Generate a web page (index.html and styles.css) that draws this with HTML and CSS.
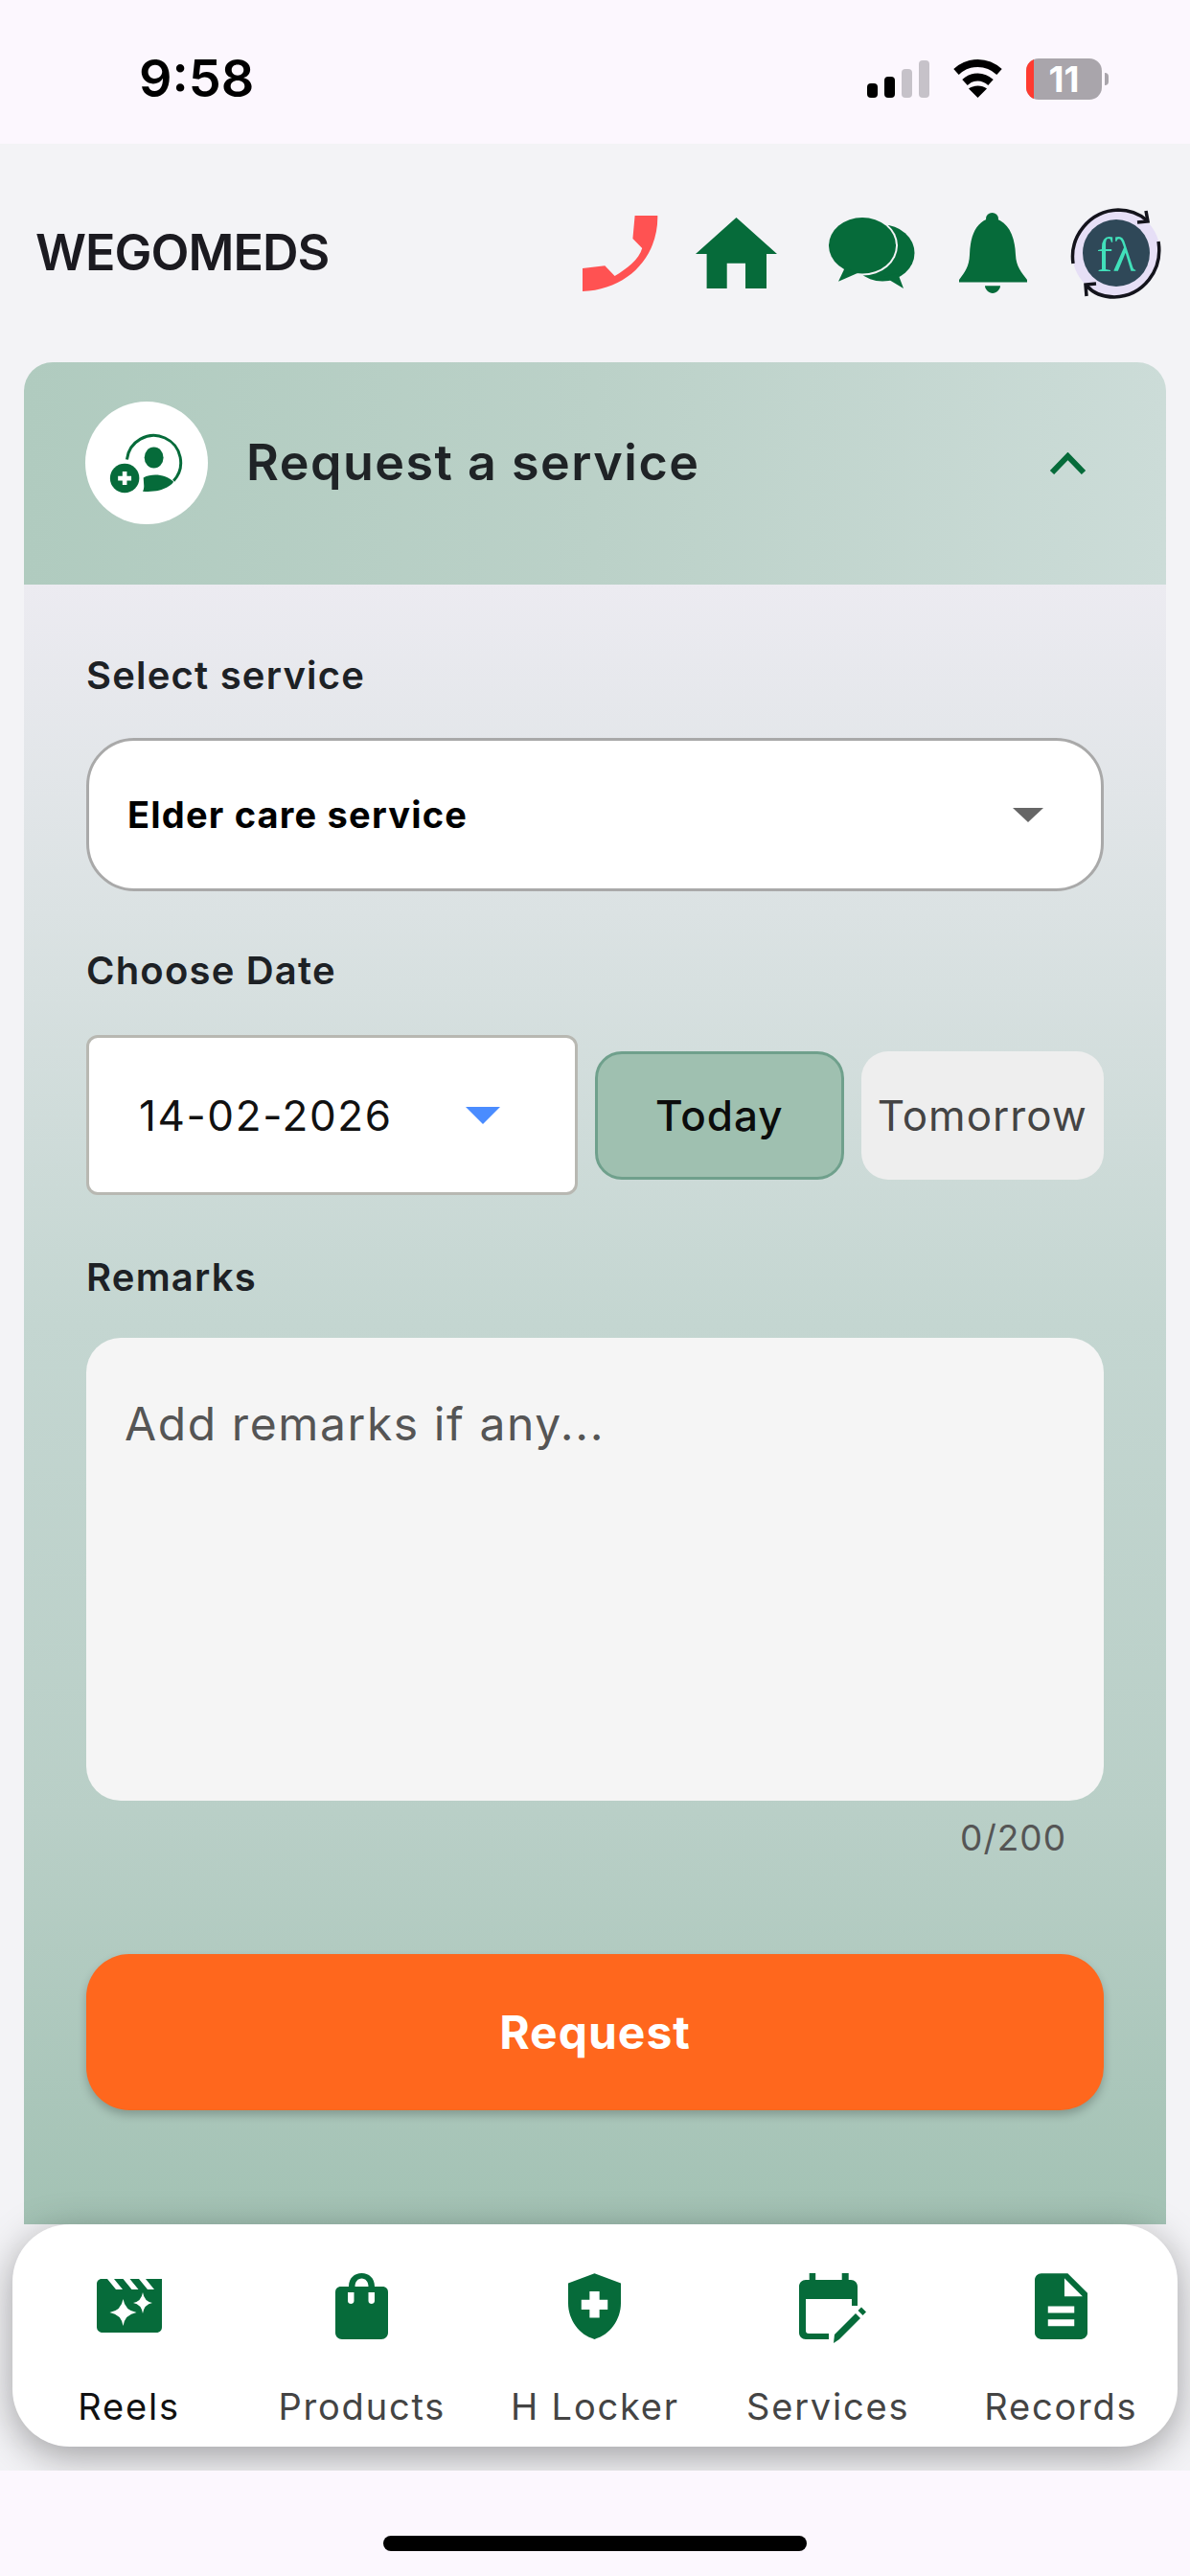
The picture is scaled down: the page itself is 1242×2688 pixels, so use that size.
FILE: index.html
```html
<!DOCTYPE html>
<html lang="en">
<head>
<meta charset="utf-8">
<title>WEGOMEDS</title>
<link rel="stylesheet" href="styles.css">
</head>
<body>
<div class="phone">
  <div class="status">
    <span class="time">9:58</span>
    <div class="status-icons">
      <div class="signal">
        <i class="bar b1"></i><i class="bar b2"></i><i class="bar b3"></i><i class="bar b4"></i>
      </div>
      <svg class="wifi" viewBox="0 0 53 40"><path d="M4 13C17 1 36 1 49 13" fill="none" stroke="#000" stroke-width="8"/><path d="M13 24C21 16.500 32 16.500 40 24" fill="none" stroke="#000" stroke-width="8"/><path d="M26.500 40L17 30.500C22 26.500 31 26.500 36 30.500Z" fill="#000"/></svg>
      <div class="battery"><span class="battery-low"></span><span class="battery-num">11</span></div>
      <span class="battery-nub"></span>
    </div>
  </div>

  <div class="app">
    <header class="topbar">
      <h1 class="brand">WEGOMEDS</h1>
      <div class="top-icons">
        <svg class="ic-phone" viewBox="0 0 79 79"><path fill="#ff5252" d="M54.600 0H78.300C79.200 42.300 47.900 77.300 0 79V55L23.300 52.300L33.600 63C45.700 55.700 59.100 45.700 62.200 34L52.400 24Z"/></svg>
        <svg class="ic-home" viewBox="0 0 85 74"><path fill="#066b3a" d="M42.500 0L85 38H74V74H52V47.700H32.700V74H11.600V38H0Z"/></svg>
        <svg class="ic-chat" viewBox="0 0 90 74"><ellipse cx="56" cy="37" rx="33.500" ry="29.500" fill="#066b3a"/><path fill="#066b3a" d="M58 62L78 74L72 58Z"/><ellipse cx="35" cy="29.300" rx="37" ry="31.300" fill="#f3f3f6"/><ellipse cx="35" cy="29.300" rx="35" ry="29.300" fill="#066b3a"/><path fill="#066b3a" d="M10 66.700L17 52L30 58Z"/></svg>
        <svg class="ic-bell" viewBox="0 0 71 84"><ellipse cx="34.500" cy="6" rx="6.500" ry="6" fill="#066b3a"/><path fill="#066b3a" d="M34.500 5C20 8 11.600 20 11 44C10.500 56 6 62 0 70V72.600H71V70C65 62 59.500 56 59 44C58 20 49 8 34.500 5Z"/><path fill="#066b3a" d="M27 76.300H43C43 80 39 84 35 84C31 84 27 80 27 76.300Z"/></svg>
        <svg class="ic-avatar" viewBox="0 0 97 95">
          <circle cx="48" cy="47" r="46" fill="#e6dff6"/>
          <circle cx="48" cy="47" r="35" fill="#2f4858"/>
          <path d="M3 58C-1 30 20 3 50 2C62 2 72 6 80 13" fill="none" stroke="#14141c" stroke-width="3.500"/>
          <path d="M70 15L81 14L79 3" fill="none" stroke="#14141c" stroke-width="3.500"/>
          <path d="M92 35C97 65 76 92 46 93C34 93 24 89 17 81" fill="none" stroke="#14141c" stroke-width="3.500"/>
          <path d="M27 79L16 80L17 92" fill="none" stroke="#14141c" stroke-width="3.500"/>
          <text class="fx" x="48" y="66" text-anchor="middle">fλ</text>
        </svg>
      </div>
    </header>

    <section class="card">
      <div class="card-head">
        <div class="head-circle">
          <svg class="ic-service" viewBox="160 155 240 190">
            <path d="M218 238A85 85 0 1 1 365 305" fill="none" stroke="#066b3a" stroke-width="9"/>
            <ellipse cx="303" cy="232" rx="30" ry="33" fill="#066b3a"/>
            <path fill="#066b3a" d="M270 295C300 280 340 285 365 308C350 330 310 342 268 338C275 325 270 310 270 295Z"/>
            <circle cx="211" cy="297" r="46" fill="#066b3a"/>
            <path fill="#fff" d="M204 276H218V290H232V304H218V318H204V304H190V290H204Z"/>
          </svg>
        </div>
        <h2 class="card-title">Request a service</h2>
        <svg class="chevron" viewBox="0 0 39 23"><path d="M3 21L19.500 4L36 21" fill="none" stroke="#066b3a" stroke-width="6"/></svg>
      </div>

      <div class="card-body">
        <div class="label label-first">Select service</div>
        <div class="select">
          <span class="select-text">Elder care service</span>
          <svg class="caret-grey" viewBox="0 0 32 15"><path d="M0 0H32L16 15Z" fill="#666"/></svg>
        </div>

        <div class="label label-date">Choose Date</div>
        <div class="date-row">
          <div class="date-box">
            <span class="date-text">14-02-2026</span>
            <svg class="caret-blue" viewBox="0 0 36 18"><path d="M0 0H36L18 18Z" fill="#4a8cff"/></svg>
          </div>
          <div class="pill pill-on">Today</div>
          <div class="pill pill-off">Tomorrow</div>
        </div>

        <div class="label label-remarks">Remarks</div>
        <div class="remarks">Add remarks if any...</div>
        <div class="counter">0/200</div>

        <div class="request">Request</div>
      </div>
    </section>

    <nav class="nav">
      <div class="nav-item active">
        <div class="nav-icon">
          <svg class="ic-reels" viewBox="0 0 68 56">
            <path fill="#066b3a" d="M5 0H68V50C68 53.500 66 56 62 56H6C2.500 56 0 53.500 0 50V5C0 2.500 2 0 5 0Z"/>
            <path fill="#fff" d="M11 0H18L27 11H20ZM27.500 0H34.500L43.500 11H36.500ZM44 0H51L60 11H53ZM60 0H68V0L68 0Z"/>
            <path fill="#fff" d="M27.500 21Q29.500 33 41.500 35Q29.500 37 27.500 49Q25.500 37 13.500 35Q25.500 33 27.500 21Z"/>
            <path fill="#fff" d="M48 14Q49.500 23.500 58 25Q49.500 26.500 48 36Q46.500 26.500 38 25Q46.500 23.500 48 14Z"/>
          </svg>
        </div>
        <span>Reels</span>
      </div>
      <div class="nav-item">
        <div class="nav-icon">
          <svg class="ic-doc" viewBox="0 0 55 69">
            <path fill="#066b3a" fill-rule="evenodd" d="M14 14C14 5 20 0 27.500 0C35 0 41 5 41 14H49C53 14 55 16.500 55 20V62C55 66 52 69 48 69H7C3 69 0 66 0 62V20C0 16.500 2 14 6 14ZM20.500 14H34.500C34.500 9 31.500 5.500 27.500 5.500C23.500 5.500 20.500 9 20.500 14ZM13 20V29C13 33 19.500 33 19.500 29V20ZM34.500 20V29C34.500 33 41 33 41 29V20Z"/>
          </svg>
        </div>
        <span>Products</span>
      </div>
      <div class="nav-item">
        <div class="nav-icon">
          <svg class="ic-doc" viewBox="4 2 16 20"><path fill="#066b3a" fill-rule="evenodd" d="M12 2L4 5V11.090C4 16.140 7.410 20.850 12 22C16.590 20.850 20 16.140 20 11.090V5ZM10.500 7.500H13.500V10H16V13H13.500V15.500H10.500V13H8V10H10.500Z"/></svg>
        </div>
        <span>H Locker</span>
      </div>
      <div class="nav-item">
        <div class="nav-icon">
          <svg class="ic-cal" viewBox="0 0 70 73">
            <path fill="#066b3a" d="M10.700 0H17.200V7H44.700V0H51.700V7H54C58 7 61 10 61 14V34H55V27H7V60C7 62 8 63 10 63H31V69H7C3 69 0 66 0 62V14C0 10 3 7 7 7H10.700Z"/>
            <path fill="#066b3a" d="M37 64L59 42L64 47L42 69L36 73Z"/>
            <path fill="#066b3a" d="M61.500 39L65 35.500L70 40.500L66.500 44Z"/>
          </svg>
        </div>
        <span>Services</span>
      </div>
      <div class="nav-item">
        <div class="nav-icon">
          <svg class="ic-doc" viewBox="4 2 16 20"><path fill="#066b3a" fill-rule="evenodd" d="M14 2H6C4.900 2 4 2.900 4 4V20C4 21.100 4.900 22 6 22H18C19.100 22 20 21.100 20 20V8ZM16 18H8V16H16ZM16 14H8V12H16ZM13 9V3.500L18.500 9Z"/></svg>
        </div>
        <span>Records</span>
      </div>
    </nav>
  </div>

  <div class="bottom"><div class="home-bar"></div></div>
</div>
</body>
</html>
```

FILE: styles.css
```css
* { box-sizing: border-box; }
html, body { margin: 0; padding: 0; }
body { font-family: "Inter", "Roboto", sans-serif; background: #fcf7fe; }
svg { display: block; }

.phone { width: 1242px; height: 2688px; display: flex; flex-direction: column; overflow: hidden; }

/* status bar */
.status {
  height: 150px; flex: none; background: #fcf7fe;
  display: flex; align-items: center; justify-content: space-between;
  padding: 14px 85px 0 145px;
}
.time { font-size: 54px; font-weight: 600; color: #000; line-height: 1; }
.status-icons { display: flex; align-items: center; }
.signal { display: flex; align-items: flex-end; gap: 7px; height: 39px; margin-top: 1px; }
.bar { display: block; width: 11px; border-radius: 4px; background: #000; }
.b1 { height: 15px; }
.b2 { height: 22px; }
.b3 { height: 30px; background: #c6c2c9; }
.b4 { height: 39px; background: #c6c2c9; }
.wifi { width: 53px; height: 40px; margin-left: 24px; }
.battery {
  position: relative; width: 79px; height: 43px; margin-left: 24px;
  border-radius: 13px; background: #a9a5ab; overflow: hidden;
  display: flex; align-items: center; justify-content: center;
}
.battery-low { position: absolute; left: 0; top: 0; bottom: 0; width: 8px; background: #ff3b30; }
.battery-num { color: #fff; font-size: 37px; font-weight: 700; line-height: 1; }
.battery-nub { width: 4px; height: 13px; margin-left: 3px; background: #a9a5ab; border-radius: 0 4px 4px 0; }

/* app */
.app { flex: 1; min-height: 0; display: flex; flex-direction: column; background: #f3f3f6; padding-bottom: 25px; }
.topbar { height: 228px; flex: none; display: flex; align-items: center; justify-content: space-between; padding: 0 28px 0 37px; }
.brand { margin: 0; font-size: 52px; font-weight: 600; color: #1b1a20; letter-spacing: -1px; line-height: 1; }
.top-icons { display: flex; align-items: center; }
.ic-phone { width: 79px; height: 79px; }
.ic-home { width: 85px; height: 74px; margin-left: 39px; }
.ic-chat { width: 90px; height: 74px; margin-left: 54px; }
.ic-bell { width: 71px; height: 84px; margin-left: 46px; }
.ic-avatar { width: 97px; height: 95px; margin-left: 45px; overflow: visible; }
.fx { font-family: "Liberation Serif", "DejaVu Serif", serif; font-size: 50px; fill: #41e0ba; }

/* card */
.card {
  flex: 1; min-height: 0; margin: 0 25px; display: flex; flex-direction: column;
  border-radius: 30px 30px 0 0; overflow: hidden;
}
.card-head {
  height: 232px; flex: none; display: flex; align-items: center;
  padding: 0 83px 22px 64px;
  background: linear-gradient(90deg, #b0cbbf 0%, #bbd1c8 50%, #ccdcd8 100%);
}
.head-circle { width: 128px; height: 128px; border-radius: 50%; background: #fff; display: flex; align-items: center; justify-content: center; flex: none; }
.ic-service { width: 80px; height: 63px; }
.card-title { margin: 0 0 0 40px; font-size: 52px; font-weight: 600; color: #1f2326; letter-spacing: 1.5px; line-height: 1; }
.chevron { width: 39px; height: 23px; margin-left: auto; }

.card-body {
  flex: 1; min-height: 0; padding: 0 65px;
  background: linear-gradient(180deg, #ecebf1 0%, #dbe2e3 20%, #c4d6d1 45%, #b9cfc7 75%, #a3c2b4 100%);
}
.label { font-size: 40px; font-weight: 600; color: #1d2125; letter-spacing: 1.2px; line-height: 50px; }
.label-first { margin-top: 70px; }
.label-date { margin-top: 58px; }
.label-remarks { margin-top: 61px; }

.select {
  height: 160px; margin-top: 40px; padding: 0 60px 0 40px;
  display: flex; align-items: center; justify-content: space-between;
  background: #fff; border: 3px solid #a9a9a9; border-radius: 50px;
}
.select-text { font-size: 38px; font-weight: 700; color: #000; letter-spacing: 1.2px; }
.caret-grey { width: 32px; height: 15px; }

.date-row { display: flex; align-items: center; gap: 18px; margin-top: 42px; }
.date-box {
  flex: none; width: 513px; height: 167px; padding: 0 78px 0 52px;
  display: flex; align-items: center; justify-content: space-between;
  background: #fff; border: 3px solid #b8b8b2; border-radius: 12px;
}
.date-text { font-size: 44px; font-weight: 400; color: #111; letter-spacing: 1.6px; }
.caret-blue { width: 36px; height: 18px; }
.pill {
  flex: 1; height: 134px; display: flex; align-items: center; justify-content: center;
  border-radius: 28px; font-size: 44px; letter-spacing: 1px;
}
.pill-on { background: #9fc0b0; border: 3px solid #6fa08c; color: #0c0c0c; font-weight: 500; }
.pill-off { background: #eeeeee; color: #444; font-weight: 400; }

.remarks {
  height: 483px; margin-top: 38px; padding: 62px 40px 0;
  background: #f5f5f5; border-radius: 36px;
  font-size: 48px; line-height: 56px; color: #555; letter-spacing: 1.6px;
}
.counter { margin-top: 19px; padding-right: 39px; text-align: right; font-size: 37px; line-height: 40px; color: #555; letter-spacing: 1px; }
.request {
  height: 163px; margin-top: 101px; display: flex; align-items: center; justify-content: center;
  background: #ff671d; border-radius: 45px; box-shadow: 0 5px 10px rgba(0, 0, 0, .22);
  color: #fff; font-size: 48px; font-weight: 700; letter-spacing: 1px;
}

/* bottom nav */
.nav {
  flex: none; height: 232px; margin: 0 13px; padding-top: 51px;
  display: grid; grid-template-columns: repeat(5, 1fr);
  background: #fff; border-radius: 60px;
  box-shadow: 0 10px 40px rgba(0, 0, 0, .35);
}
.nav-item { display: flex; flex-direction: column; align-items: center; font-size: 38px; line-height: 44px; color: #444; letter-spacing: 1.8px; }
.nav-item.active { color: #111; }
.nav-icon { height: 73px; margin-bottom: 44px; display: flex; align-items: flex-start; }
.ic-reels { width: 68px; height: 56px; margin-top: 6px; }
.ic-doc { width: 55px; height: 69px; }
.ic-cal { width: 70px; height: 73px; margin-left: 9px; }

/* bottom safe area */
.bottom { height: 110px; flex: none; background: #fcf7fe; display: flex; justify-content: center; padding-top: 68px; }
.home-bar { width: 442px; height: 16px; border-radius: 8px; background: #000; }
```
